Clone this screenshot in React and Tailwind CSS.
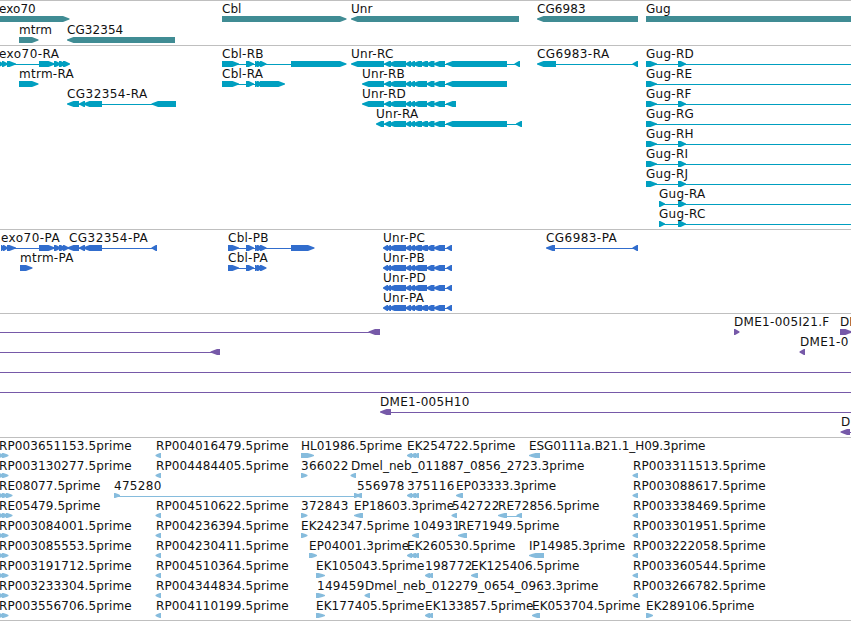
const WIDTH = 851;

const UNR_CORE = [[388, 406], [405, 411], [409, 415], [412, 422], [419, 428], [426, 434.5], [433, 445]];
const UNR_MERGED = [[388, 406], [405, 411], [409, 415], [412, 427], [426, 434.5], [433, 445]];
const UNR_CDS = [[383, 388], [386, 391], ...UNR_CORE, [446.5, 452]];
const UNR_CDS_MERGED = [[383, 388], [386, 391], ...UNR_MERGED, [446.5, 452]];
const CBL_SMALL = [[246, 254], [255, 260], [257, 263], [260, 266.5]];
const EK_TRIPLE = [[407, 412], [410, 416], [413, 419]];

// name, label x, direction, blocks, optional extent of the connecting line
const f = (name, x, dir, blocks, line) => ({ name, x, dir, blocks, line });
const gug = (name, blocks) => f(name, blocks[0][0], 'r', blocks, [blocks[0][0], WIDTH]);
const rpLeft = (id) => f(`RP${id}.5prime`, -1, 'r', [[-2, 4.5], [2, 8.5]]);
const reLeft = (id) => f(`RE${id}.5prime`, -1, 'r', [[-2, 4.5], [2, 8.5], [6, 12.5]]);
const rpMid = (id) => f(`RP${id}.5prime`, 156, 'l', [[155.5, 161]]);
const rpRight = (id) => f(`RP${id}.5prime`, 633, 'l', [[632.5, 638]]);

const tracks = [
  {
    id: 'genes',
    color: '#408c94',
    size: 6,
    rows: [
      [
        f('exo70', -1, 'r', [[-10, 69.5]]),
        f('Cbl', 222, 'r', [[222, 346.5]]),
        f('Unr', 351, 'l', [[351, 519]]),
        f('CG6983', 537, 'l', [[537, 638]]),
        f('Gug', 646, 'r', [[646, 870]]),
      ],
      [f('mtrm', 19, 'r', [[19, 38.5]]), f('CG32354', 67, 'l', [[67, 175]])],
    ],
  },
  {
    id: 'transcripts',
    color: '#009fc0',
    size: 6,
    rows: [
      [
        f('exo70-RA', -1, 'r', [[-3, 4], [2, 8], [7, 16], [39, 55], [54, 61], [59, 66], [63, 70]]),
        f('Cbl-RB', 222, 'r', [[222, 239], ...CBL_SMALL, [291, 346.5]]),
        f('Unr-RC', 351, 'l', [[351, 384], [384, 391], ...UNR_CORE, [446, 507], [514.5, 520]]),
        f('CG6983-RA', 537, 'l', [[537, 556], [632.5, 638]]),
        gug('Gug-RD', [[646, 657], [678, 686]]),
      ],
      [
        f('mtrm-RA', 19, 'r', [[19, 38.5]]),
        f('Cbl-RA', 222, 'r', [[222, 239], [246, 254], [255, 260], [257, 263], [260, 285]]),
        f('Unr-RB', 362, 'l', [[362, 384], [384, 391], ...UNR_MERGED, [446, 507]]),
        gug('Gug-RE', [[646, 657]]),
      ],
      [
        f('CG32354-RA', 67, 'l', [[67, 79], [79, 85], [83, 102], [151.5, 176]]),
        f('Unr-RD', 362, 'l', [[362, 384], [384, 391], ...UNR_MERGED, [446, 456]]),
        gug('Gug-RF', [[646, 657], [678, 686]]),
      ],
      [
        f('Unr-RA', 376, 'l', [[376, 384], [384, 391], ...UNR_CORE, [446, 507], [516, 522]]),
        gug('Gug-RG', [[646, 657]]),
      ],
      [gug('Gug-RH', [[646, 657], [678, 686]])],
      [gug('Gug-RI', [[646, 657], [678, 686]])],
      [gug('Gug-RJ', [[646, 657], [678, 686]])],
      [gug('Gug-RA', [[659, 665], [678, 686]])],
      [gug('Gug-RC', [[659, 665], [678, 686]])],
    ],
  },
  {
    id: 'proteins',
    color: '#316dcd',
    size: 6,
    rows: [
      [
        f('exo70-PA', 1, 'r', [[1, 5], [3, 8], [7, 16], [39, 55], [54, 61], [59, 66], [63, 69]]),
        f('CG32354-PA', 69, 'l', [[67, 79], [79, 85], [83, 102], [151.5, 157]]),
        f('Cbl-PB', 228, 'r', [[228, 239], ...CBL_SMALL, [291, 314.5]]),
        f('Unr-PC', 383, 'l', UNR_CDS),
        f('CG6983-PA', 546, 'l', [[546, 555], [632.5, 638]]),
      ],
      [
        f('mtrm-PA', 20, 'r', [[20, 32.5]]),
        f('Cbl-PA', 228, 'r', [[228, 239], ...CBL_SMALL]),
        f('Unr-PB', 383, 'l', UNR_CDS_MERGED),
      ],
      [f('Unr-PD', 383, 'l', UNR_CDS_MERGED)],
      [f('Unr-PA', 383, 'l', UNR_CDS)],
    ],
  },
  {
    id: 'clones',
    color: '#7659a8',
    size: 6,
    rows: [
      [
        f('', 0, 'l', [[368.5, 380]], [0, 375]),
        f('DME1-005I21.F', 734, 'r', [[734, 739.5]]),
        f('DM', 840, 'r', [[840, 852]]),
      ],
      [f('', 0, 'l', [[210.5, 220]], [0, 215]), f('DME1-0', 800, 'l', [[799.5, 805]])],
      [f('', 0, 'l', [], [0, WIDTH])],
      [f('', 0, 'l', [], [0, WIDTH])],
      [f('DME1-005H10', 380, 'l', [[380, 391]], [385, WIDTH])],
      [f('D', 841, 'l', [[840.5, 850]], [845, WIDTH])],
    ],
  },
  {
    id: 'ests',
    color: '#86bcdd',
    size: 5,
    rows: [
      [
        rpLeft('003651153'),
        rpMid('004016479'),
        f('HL01986.5prime', 301, 'r', [[301, 314]]),
        f('EK254722.5prime', 407, 'l', EK_TRIPLE),
        f('ESG0111a.B21.1_H09.3prime', 529, 'l', [[529, 540]]),
      ],
      [
        rpLeft('003130277'),
        rpMid('004484405'),
        f('366022', 301, 'r', [[301, 307.5]]),
        f('Dmel_neb_011887_0856_2723.3prime', 351, 'l', [[350.5, 356]]),
        rpRight('003311513'),
      ],
      [
        reLeft('08077'),
        f('475280', 114, 'r', [[114, 120], [354, 360]]),
        f('556978', 357, 'l', [[356, 362]]),
        f('375116', 407, 'l', EK_TRIPLE),
        f('EP03333.3prime', 456, 'l', [[456, 463]]),
        rpRight('003088617'),
      ],
      [
        reLeft('05479'),
        rpMid('004510622'),
        f('372843', 301, 'r', [[301, 307.5]]),
        f('EP18603.3prime', 354, 'l', [[354, 363]]),
        f('542722', 452, 'l', [[451.5, 457]]),
        f('RE72856.5prime', 498, 'l', [[498, 507], [516.5, 522]]),
        rpRight('003338469'),
      ],
      [
        rpLeft('003084001'),
        rpMid('004236394'),
        f('EK242347.5prime', 301, 'r', [[301, 307.5]]),
        f('104931', 413, 'l', [[412, 419]]),
        f('RE71949.5prime', 458, 'l', [[458, 467]]),
        rpRight('003301951'),
      ],
      [
        rpLeft('003085553'),
        rpMid('004230411'),
        f('EP04001.3prime', 309, 'r', [[309, 317]]),
        f('EK260530.5prime', 407, 'l', EK_TRIPLE),
        f('IP14985.3prime', 529, 'l', [[529, 544]]),
        rpRight('003222058'),
      ],
      [
        rpLeft('003191712'),
        rpMid('004510364'),
        f('EK105043.5prime', 316, 'r', [[316, 325]]),
        f('198772', 425, 'l', [[425, 430], [427, 433]]),
        f('EK125406.5prime', 471, 'l', [[471, 478]]),
        rpRight('003360544'),
      ],
      [
        rpLeft('003233304'),
        rpMid('004344834'),
        f('149459', 317, 'r', [[316, 325]]),
        f('Dmel_neb_012279_0654_0963.3prime', 365, 'l', [[364.5, 370]]),
        rpRight('003266782'),
      ],
      [
        rpLeft('003556706'),
        rpMid('004110199'),
        f('EK177405.5prime', 316, 'r', [[316, 325]]),
        f('EK133857.5prime', 425, 'l', [[425, 430], [427, 433]]),
        f('EK053704.5prime', 532, 'l', [[532, 540]]),
        f('EK289106.5prime', 646, 'r', [[646, 653]]),
      ],
    ],
  },
];

// block with a rounded-off head: flat body, a shoulder, then a one pixel tip
function arrowPoints([a, b], dir, size) {
  const head = Math.min(b - a, 6.5);
  const tip = dir === 'r' ? b : a;
  const back = dir === 'r' ? a : b;
  const s = dir === 'r' ? -1 : 1;
  const neck = b - a < 9 ? head * 0.8 : head;
  const top = 14;
  const mid = top + size / 2;
  const bottom = top + size;
  return [
    [back, top],
    [tip + s * neck, top],
    [tip + s * neck * 0.4, mid - 1.6],
    [tip, mid - 0.5],
    [tip, mid + 0.5],
    [tip + s * neck * 0.4, mid + 1.6],
    [tip + s * neck, bottom],
    [back, bottom],
  ]
    .map((p) => p.join(','))
    .join(' ');
}

function getSpacing(name) {
  if (name.startsWith('ESG')) return -0.06;
  if (name.startsWith('Dmel')) return 0.06;
  if (name.startsWith('DME1')) return 0.3;
  if (name.includes('-')) return /\d/.test(name) ? 0.44 : 0.26;
  if (/^\d+$/.test(name)) return 0.3;
  if (name.startsWith('RP')) return 0.11;
  return 0.06;
}

function Feature({ feature, size }) {
  const { name, x, dir, blocks, line } = feature;
  const [start, end] = line || [blocks[0][0] + 3, blocks[blocks.length - 1][1] - 3];
  const showLine = line || blocks.length > 1;

  return (
    <g>
      {showLine && <rect x={start} y={17} width={end - start} height={1} />}
      {blocks.map((block, i) => (
        <polygon key={i} points={arrowPoints(block, dir, size)} />
      ))}
      {name && (
        <text x={x} y={11} letterSpacing={getSpacing(name)} className="fill-[#111]">
          {name}
        </text>
      )}
    </g>
  );
}

function Track({ track }) {
  return (
    <section
      className={`flex flex-col border-t border-[#bfbfbf] pt-px ${
        track.id === 'genes' ? 'gap-px' : ''
      } ${track.id === 'ests' ? 'border-b pb-px' : 'pb-0.5'}`}
    >
      {track.rows.map((row, i) => (
        <svg
          key={i}
          width={WIDTH}
          height={20}
          fill={track.color}
          className="block shrink-0 overflow-hidden text-[12px]"
        >
          {row.map((feature, j) => (
            <Feature key={j} feature={feature} size={track.size} />
          ))}
        </svg>
      ))}
    </section>
  );
}

export default function App() {
  return (
    <div className="flex h-[621px] w-[851px] flex-col overflow-hidden bg-white font-['DejaVu_Sans',sans-serif]">
      {tracks.map((track) => (
        <Track key={track.id} track={track} />
      ))}
    </div>
  );
}
